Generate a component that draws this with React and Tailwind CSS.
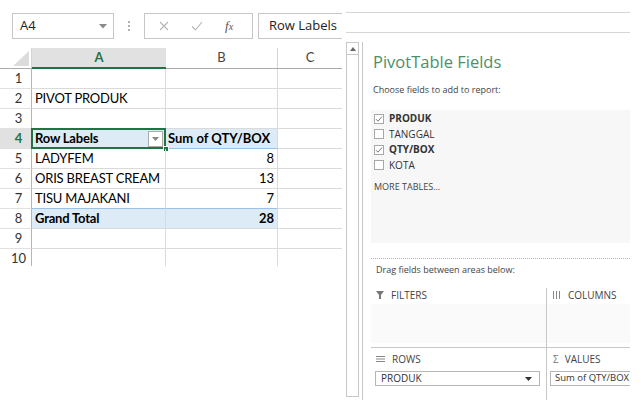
import React from "react";

const cellFont = { fontFamily: "Lato, 'Liberation Sans', sans-serif" };

function Row({ n, a, b, kind, sel }) {
  const blue = kind === "head" || kind === "total";
  const bold = blue;
  return (
    <div className="flex h-[20px]">
      <div
        className={`w-[32px] shrink-0 flex items-center justify-center pl-[6px] border-b border-[#e1e1e1] border-r border-r-[#b5b5b5] text-[13px] ${
          sel ? "bg-[#e1e1e1] text-[#217346] font-bold" : "text-[#333]"
        }`}
      >
        {n}
      </div>
      <div
        className={`relative w-[134px] shrink-0 flex items-center pl-[3px] text-[13px] tracking-[-0.2px] text-black border-r border-[#dadada] ${
          blue ? "bg-[#ddebf7]" : ""
        } ${kind === "head" ? "border-b border-b-[#9bc2e6]" : "border-b border-b-[#dadada]"} ${
          kind === "total" ? "border-t border-t-[#9bc2e6] -mt-px" : ""
        } ${bold ? "font-bold" : ""}`}
      >
        {a}
        {sel && (
          <>
            <div className="absolute inset-[-1px] border-2 border-[#217346] pointer-events-none" />
            <div className="absolute right-[-4px] bottom-[-4px] w-[6px] h-[6px] bg-[#217346] border border-white" />
            <div className="absolute right-[2px] top-[2px] w-[15px] h-[16px] border border-[#ababab] bg-white flex items-center justify-center">
              <svg width="7" height="4" viewBox="0 0 7 4">
                <path d="M0 0h7L3.5 4z" fill="#888" />
              </svg>
            </div>
          </>
        )}
      </div>
      <div
        className={`w-[112px] shrink-0 flex items-center justify-end pr-[3px] text-[13px] text-black border-r border-[#dadada] ${
          blue ? "bg-[#ddebf7]" : ""
        } ${kind === "head" ? "border-b border-b-[#9bc2e6]" : "border-b border-b-[#dadada]"} ${
          kind === "total" ? "border-t border-t-[#9bc2e6] -mt-px" : ""
        } ${bold ? "font-bold" : ""} ${kind === "head" ? "justify-start pl-[2px]" : ""}`}
      >
        {b}
      </div>
      <div className="w-[64px] shrink-0 border-b border-[#dadada]" />
    </div>
  );
}

function Check({ on }) {
  return (
    <div className="w-[10px] h-[10px] border border-[#a8a8a8] bg-white flex items-center justify-center">
      {on && (
        <svg width="8" height="8" viewBox="0 0 8 8">
          <path d="M1 4.2l2 2L7 1.5" stroke="#666" strokeWidth="0.9" fill="none" />
        </svg>
      )}
    </div>
  );
}

export default function App() {
  const panelFont = { fontFamily: "'Open Sans', 'Noto Sans', sans-serif" };
  return (
    <div className="w-[643px] h-[400px] bg-white flex overflow-hidden">
      {/* LEFT: Excel */}
      <div className="w-[342px] shrink-0 flex flex-col" style={cellFont}>
        <div className="flex items-stretch mt-[13px] h-[26px]" style={{ fontFamily: "'Open Sans', sans-serif" }}>
          <div className="ml-[12px] w-[102px] border border-[#c6c6c6] flex items-center justify-between pl-[7px] pr-[6px] text-[13px] text-[#222]">
            <span>A4</span>
            <svg width="8" height="5" viewBox="0 0 8 5">
              <path d="M0 0h8L4 4.5z" fill="#8a8a8a" />
            </svg>
          </div>
          <div className="w-[30px] flex flex-col items-center justify-center gap-[2px]">
            <div className="w-[2px] h-[2px] bg-[#b0b0b0]" />
            <div className="w-[2px] h-[2px] bg-[#b0b0b0]" />
            <div className="w-[2px] h-[2px] bg-[#b0b0b0]" />
          </div>
          <div className="w-[109px] border border-[#c6c6c6] flex items-center pl-[14px] gap-[22px]">
            <svg width="10" height="10" viewBox="0 0 10 10">
              <path d="M1 1l8 8M9 1L1 9" stroke="#b5b5b5" strokeWidth="1.1" />
            </svg>
            <svg width="12" height="10" viewBox="0 0 12 10">
              <path d="M1 5.5l3.5 3.5L11 1" stroke="#b5b5b5" strokeWidth="1.1" fill="none" />
            </svg>
            <span className="text-[13px] italic text-[#555]" style={{ fontFamily: "'Liberation Serif', serif" }}>
              f<span className="text-[10px]">x</span>
            </span>
          </div>
          <div className="ml-[5px] flex-1 border-y border-l border-[#c6c6c6] flex items-center pl-[10px] text-[13px] text-[#222]">
            Row Labels
          </div>
        </div>

        {/* column headers */}
        <div className="flex h-[21px] mt-[9px] border-b border-[#ababab] text-[13px]">
          <div className="w-[32px] shrink-0 flex items-end justify-end pr-[2px] pb-[2px] border-r border-[#d4d4d4]">
            <svg width="16" height="15" viewBox="0 0 16 15">
              <path d="M16 0V15H0z" fill="#dcdcdc" />
            </svg>
          </div>
          <div className="w-[134px] shrink-0 bg-[#e1e1e1] border-b-2 border-[#217346] -mb-px flex items-center justify-center font-bold text-[#217346]">
            A
          </div>
          <div className="w-[112px] shrink-0 border-r border-[#d4d4d4] flex items-center justify-center text-[#444]">
            B
          </div>
          <div className="w-[64px] shrink-0 flex items-center justify-center text-[#444]">C</div>
        </div>

        <Row n="1" a="" b="" />
        <Row n="2" a="PIVOT PRODUK" b="" />
        <Row n="3" a="" b="" />
        <Row n="4" a="Row Labels" b="Sum of QTY/BOX" kind="head" sel />
        <Row n="5" a="LADYFEM" b="8" />
        <Row n="6" a="ORIS BREAST CREAM" b="13" />
        <Row n="7" a="TISU MAJAKANI" b="7" />
        <Row n="8" a="Grand Total" b="28" kind="total" />
        <Row n="9" a="" b="" />
        <div className="flex h-[17px]">
          <div className="w-[32px] shrink-0 flex items-start justify-center pl-[6px] border-r border-[#b5b5b5] text-[13px] text-[#333] leading-[18px]">
            10
          </div>
          <div className="w-[134px] shrink-0 border-r border-[#dadada]" />
          <div className="w-[112px] shrink-0 border-r border-[#dadada]" />
        </div>
      </div>

      {/* RIGHT: PivotTable panel */}
      <div className="flex-1 min-w-0 flex flex-col" style={panelFont}>
        <div className="ml-[4px] mt-[12px] w-[284px] h-[21px] border-y border-[#d4d4d4]" />
        <div className="flex flex-1 min-w-0 mt-[9px]">
          <div className="ml-[4px] w-[13px] shrink-0 border border-[#c8c8c8] flex flex-col mb-[3px]">
            <div className="h-[12px] border-b border-[#c8c8c8] flex items-center justify-center">
              <svg width="6" height="4" viewBox="0 0 6 4">
                <path d="M0 4h6L3 0z" fill="#666" />
              </svg>
            </div>
          </div>
          <div className="ml-[3px] border-l border-[#c8c8c8] flex-1 min-w-0 flex flex-col pt-[8px] pr-[13px]">
            <div className="pl-[10px] text-[16.5px] leading-[24px] text-[#4d9068]">PivotTable Fields</div>
            <div className="pl-[10px] mt-[10px] text-[9px] leading-[12px] text-[#444]">
              Choose fields to add to report:
            </div>
            <div className="ml-[8px] mt-[14px] h-[133px] bg-[#f7f7f7] pt-[1px] pl-[3px] text-[10px] text-[#333]">
              <div className="flex items-center gap-[5px] h-[15.5px]">
                <Check on />
                <span className="font-bold">PRODUK</span>
              </div>
              <div className="flex items-center gap-[5px] h-[15.5px]">
                <Check />
                <span>TANGGAL</span>
              </div>
              <div className="flex items-center gap-[5px] h-[15.5px]">
                <Check on />
                <span className="font-bold">QTY/BOX</span>
              </div>
              <div className="flex items-center gap-[5px] h-[15.5px]">
                <Check />
                <span>KOTA</span>
              </div>
              <div className="mt-[7px] text-[9px] text-[#444]">MORE TABLES...</div>
            </div>
            <div className="ml-[8px] mt-[15px] border-t border-dotted border-[#b5b5b5]" />
            <div className="pl-[13px] mt-[5px] text-[9px] leading-[12px] text-[#444]">
              Drag fields between areas below:
            </div>
            <div className="ml-[8px] mt-[12px] flex-1 min-w-0 flex flex-col text-[10px] text-[#444]">
              <div className="flex h-[60px] border-b border-[#c8c8c8]">
                <div className="w-[176px] shrink-0 border-r border-[#c8c8c8] flex flex-col">
                  <div className="flex items-center gap-[7px] pl-[5px] h-[14px]">
                    <svg width="8" height="8" viewBox="0 0 8 8">
                      <path d="M0 0h8L5 4v4H3V4z" fill="#777" />
                    </svg>
                    <span>FILTERS</span>
                  </div>
                  <div className="flex-1 bg-[#fafafa] mt-[2px] mb-[4px]" />
                </div>
                <div className="flex-1 min-w-0 flex flex-col">
                  <div className="flex items-center gap-[8px] pl-[6px] h-[14px]">
                    <svg width="7" height="8" viewBox="0 0 7 8">
                      <path d="M0.5 0v8M3.5 0v8M6.5 0v8" stroke="#888" strokeWidth="1" />
                    </svg>
                    <span>COLUMNS</span>
                  </div>
                  <div className="flex-1 bg-[#fafafa] mt-[2px] mb-[4px]" />
                </div>
              </div>
              <div className="flex flex-1 min-w-0">
                <div className="w-[176px] shrink-0 border-r border-[#c8c8c8] flex flex-col pt-[4px]">
                  <div className="flex items-center gap-[7px] pl-[5px] h-[14px]">
                    <svg width="9" height="6" viewBox="0 0 9 6">
                      <path d="M0 0.5h9M0 3h9M0 5.5h9" stroke="#888" strokeWidth="1" />
                    </svg>
                    <span>ROWS</span>
                  </div>
                  <div className="ml-[4px] mr-[6px] mt-[5px] h-[15px] border border-[#b5b5b5] flex items-center justify-between pl-[5px] pr-[7px] text-[#333]">
                    <span>PRODUK</span>
                    <svg width="7" height="4" viewBox="0 0 7 4">
                      <path d="M0 0h7L3.5 4z" fill="#333" />
                    </svg>
                  </div>
                </div>
                <div className="flex-1 min-w-0 flex flex-col pt-[4px] overflow-hidden">
                  <div className="flex items-center gap-[6px] pl-[6px] h-[14px]">
                    <span className="text-[10px] text-[#777]">Σ</span>
                    <span>VALUES</span>
                  </div>
                  <div className="ml-[3px] mt-[5px] h-[15px] border-y border-l border-[#b5b5b5] flex items-center pl-[4px] text-[9.5px] text-[#333] whitespace-nowrap overflow-hidden">
                    Sum of QTY/BOX
                  </div>
                </div>
              </div>
            </div>
          </div>
        </div>
      </div>
    </div>
  );
}
